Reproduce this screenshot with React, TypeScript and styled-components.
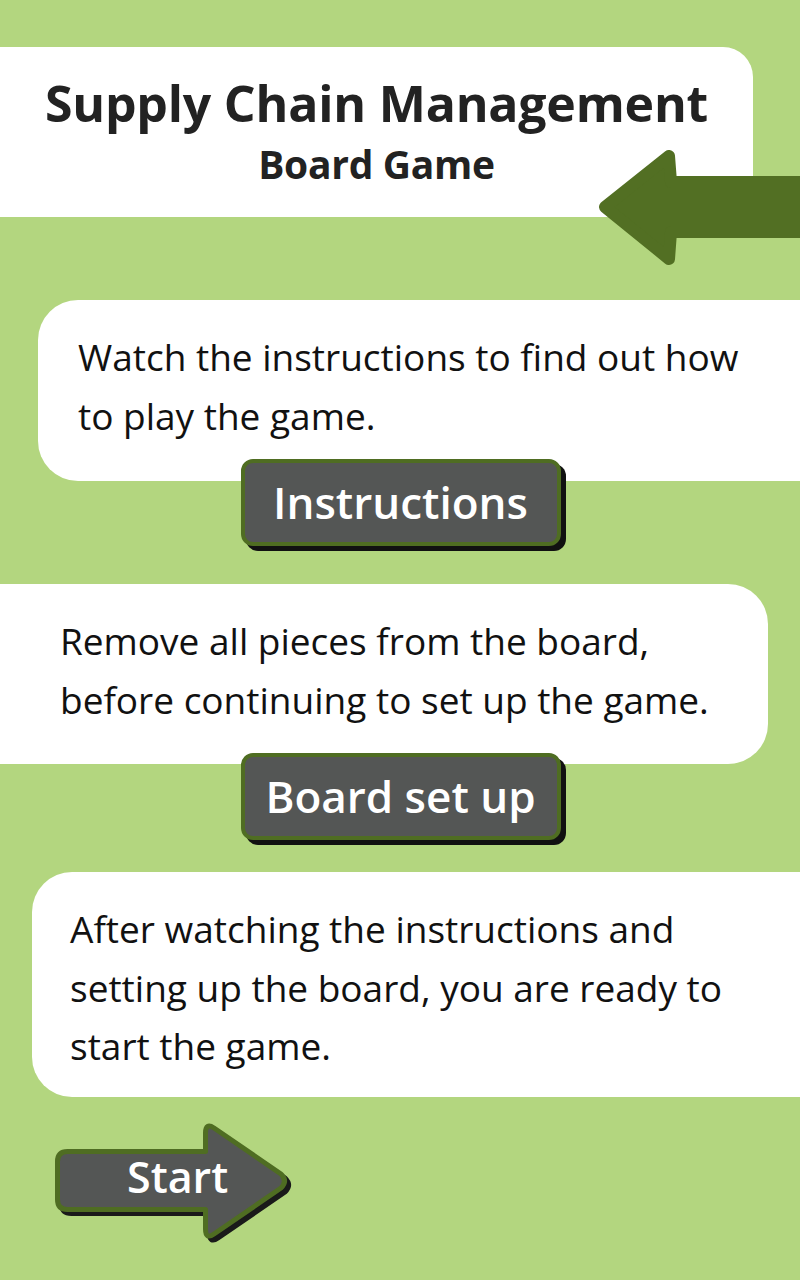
import React from "react";
import styled, { createGlobalStyle } from "styled-components";

const Global = createGlobalStyle`
  html, body { margin: 0; padding: 0; }
  body {
    background: #b3d67f;
    font-family: "Open Sans", "Noto Sans", sans-serif;
    width: 800px;
    min-height: 1280px;
    overflow: hidden;
  }
`;

const Page = styled.div`
  width: 800px;
  height: 1280px;
  background: #b3d67f;
  display: flex;
  flex-direction: column;
  padding-top: 47px;
  box-sizing: border-box;
`;

const HeaderWrap = styled.div`
  position: relative;
  width: 800px;
  height: 170px;
`;

const HeaderCard = styled.header`
  width: 753px;
  height: 170px;
  background: #fff;
  border-top-right-radius: 30px;
  display: flex;
  flex-direction: column;
  align-items: center;
  box-sizing: border-box;
  padding-top: 24px;
`;

const Title = styled.h1`
  margin: 0;
  font-family: "Open Sans", sans-serif;
  font-weight: 700;
  font-size: 50px;
  line-height: 64px;
  color: #222;
  letter-spacing: -0.2px;
`;

const Subtitle = styled.h2`
  margin: 0;
  font-family: "Open Sans", sans-serif;
  font-weight: 700;
  font-size: 39px;
  line-height: 58px;
  color: #222;
  letter-spacing: -0.3px;
`;

const BackArrow = styled.svg`
  position: absolute;
  left: 597px;
  top: 103px;
`;

const Card = styled.section<{ $side: "left" | "right"; $inset: number; $pad: number; $h: number; $top: number }>`
  margin-top: ${(p) => p.$top}px;
  ${(p) => (p.$side === "left" ? `margin-left: ${p.$inset}px;` : `margin-right: ${p.$inset}px;`)}
  height: ${(p) => p.$h}px;
  background: #fff;
  border-radius: ${(p) => (p.$side === "left" ? "40px 0 0 40px" : "0 40px 40px 0")};
  box-sizing: border-box;
  padding-left: ${(p) => p.$pad}px;
  padding-top: 28px;
`;

const CardText = styled.p`
  margin: 0;
  font-family: "Open Sans", sans-serif;
  font-weight: 400;
  font-size: 37px;
  line-height: 58.5px;
  color: #111;
  letter-spacing: 0;
  white-space: nowrap;
`;

const ButtonRow = styled.div<{ $top: number }>`
  display: flex;
  justify-content: center;
  margin-top: ${(p) => p.$top}px;
  position: relative;
`;

const ActionButton = styled.button`
  width: 320px;
  height: 87px;
  margin-left: 1px;
  background: #545655;
  border: 4px solid #4f6d22;
  border-radius: 12px;
  box-shadow: 5px 5px 0 #111;
  box-sizing: border-box;
  color: #fff;
  font-family: "Open Sans", sans-serif;
  font-weight: 600;
  font-size: 44px;
  line-height: 1;
  padding: 0 0 2px;
  display: flex;
  align-items: center;
  justify-content: center;
  cursor: pointer;
`;

const StartButton = styled.button`
  position: relative;
  margin-top: 23px;
  margin-left: 55px;
  width: 240px;
  height: 127px;
  padding: 0 0 14px 72px;
  border: none;
  background: transparent;
  display: flex;
  align-items: center;
  cursor: pointer;
`;

const StartShape = styled.svg`
  position: absolute;
  left: 0;
  top: 0;
`;

const StartLabel = styled.span`
  position: relative;
  color: #fff;
  font-family: "Open Sans", sans-serif;
  font-weight: 600;
  font-size: 43px;
  line-height: 1;
`;

const startPath =
  "M12.5,31.5 L150.5,31.5 L150.5,13 Q150.5,2.5 159,8 L226,54 Q233,61 226,68 L159,114 Q150.5,120 150.5,109 L150.5,89.5 L12.5,89.5 Q2.5,89.5 2.5,79.5 L2.5,41.5 Q2.5,31.5 12.5,31.5 Z";

export default function App() {
  return (
    <>
      <Global />
      <Page>
        <HeaderWrap>
          <HeaderCard>
            <Title>Supply Chain Management</Title>
            <Subtitle>Board Game</Subtitle>
          </HeaderCard>
          <BackArrow width="203" height="116" viewBox="0 0 203 116" aria-hidden="true">
            <polygon
              points="8,57 72,6 74,32 215,32 215,82 74,82 72,109"
              fill="#526f23"
              stroke="#526f23"
              strokeWidth="12"
              strokeLinejoin="round"
            />
          </BackArrow>
        </HeaderWrap>

        <Card $side="left" $inset={38} $pad={40} $h={181} $top={83}>
          <CardText>
            Watch the instructions to find out how
            <br />
            to play the game.
          </CardText>
        </Card>
        <ButtonRow $top={-22}>
          <ActionButton>Instructions</ActionButton>
        </ButtonRow>

        <Card $side="right" $inset={32} $pad={60} $h={180} $top={38}>
          <CardText>
            Remove all pieces from the board,
            <br />
            before continuing to set up the game.
          </CardText>
        </Card>
        <ButtonRow $top={-11}>
          <ActionButton>Board set up</ActionButton>
        </ButtonRow>

        <Card $side="left" $inset={32} $pad={38} $h={225} $top={32}>
          <CardText>
            After watching the instructions and
            <br />
            setting up the board, you are ready to
            <br />
            start the game.
          </CardText>
        </Card>

        <StartButton>
          <StartShape width="240" height="127" viewBox="0 0 240 127" aria-hidden="true">
            <path d={startPath} transform="translate(4,4)" fill="#1a1a1a" stroke="#1a1a1a" strokeWidth="5" strokeLinejoin="round" />
            <path d={startPath} fill="#545655" stroke="#4f6d22" strokeWidth="5" strokeLinejoin="round" />
          </StartShape>
          <StartLabel>Start</StartLabel>
        </StartButton>
      </Page>
    </>
  );
}
